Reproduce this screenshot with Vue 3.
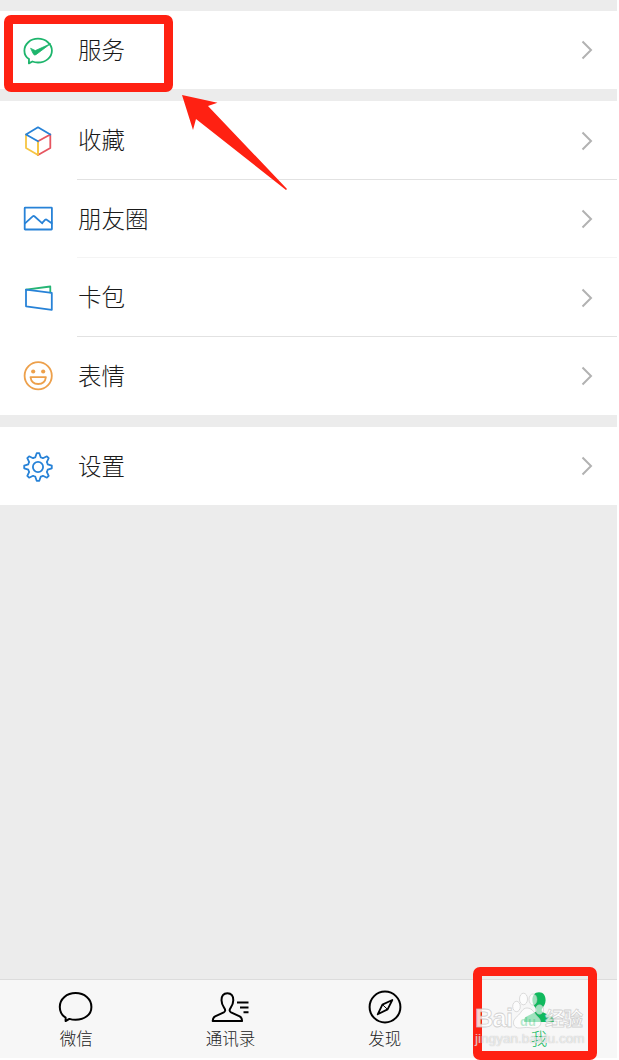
<script setup>
const groups = [
  [{ id: 'service', label: '服务' }],
  [
    { id: 'favorites', label: '收藏' },
    { id: 'moments', label: '朋友圈' },
    { id: 'cards', label: '卡包' },
    { id: 'stickers', label: '表情' }
  ],
  [{ id: 'settings', label: '设置' }]
]

const tabs = [
  { id: 'chats', label: '微信' },
  { id: 'contacts', label: '通讯录' },
  { id: 'discover', label: '发现' },
  { id: 'me', label: '我' }
]

const activeTab = 'me'
</script>

<template>
  <div class="page">
    <div class="screen">
      <!-- Menu -->
      <main class="menu">
        <section v-for="(group, i) in groups" :key="i" class="group">
          <div v-for="item in group" :key="item.id" :class="['row', 'row-' + item.id]">
            <svg class="row-icon" viewBox="0 0 32 32" fill="none" stroke-width="1.8" stroke-linejoin="round" stroke-linecap="round" aria-hidden="true">
              <g v-if="item.id === 'service'" stroke="#1db56c">
                <path d="M7 24.1C3.8 22 2.4 19.1 2.4 15.7C2.4 9.1 8.3 3.7 16 3.7S29.9 9.1 29.9 15.7S23.7 27.5 16 27.5C14 27.5 12.1 27.2 10.4 26.5L6.9 28.4Z" />
                <path d="M8.9 13.4L13.3 15.6L28.6 8.7L13.9 19.7Q12.3 20.7 11.3 19Z" fill="#1db56c" stroke-width=".8" />
              </g>
              <g v-else-if="item.id === 'favorites'">
                <path d="M4 9.5V23L16 30V16" stroke="#f6c543" />
                <path d="M16 30L28.3 23V9.5L16 16.3" stroke="#e65560" />
                <path d="M16 16.3V30" stroke="#f6c543" />
                <path d="M16 16.3L4 9.5L16 2.3L28.3 9.5" stroke="#2782d7" />
              </g>
              <g v-else-if="item.id === 'moments'" stroke="#2782d7">
                <rect x="2.7" y="4.7" width="27.2" height="21.8" rx=".5" />
                <path d="M3 20.3L11 13.2Q11.7 12.7 12.4 13.3L20.3 20.3M20 20.2L23.3 16.7Q24 16.1 24.7 16.7L29.7 20.3" />
              </g>
              <g v-else-if="item.id === 'cards'">
                <path d="M4 7.7L28.3 4.5V10.4" stroke="#25b574" />
                <path d="M4 7.7L29.8 10.9V27.8L4 24.3Z" stroke="#2782d7" />
              </g>
              <g v-else-if="item.id === 'stickers'" stroke="#eda04b">
                <circle cx="16.2" cy="15.8" r="13.6" />
                <path d="M8.5 17.1H23.9Q23 24 16.2 24T8.5 17.1Z" />
                <circle cx="11.2" cy="11.5" r="2.1" fill="#eda04b" stroke="none" />
                <circle cx="21.2" cy="11.5" r="2.1" fill="#eda04b" stroke="none" />
              </g>
              <g v-else stroke="#2782d7">
                <path d="M13.3 6.3L14.7 2.2H17.3L18.7 6.3Q20 6.6 20.9 7.2L24.9 5.3L26.7 7.1L24.8 11.1Q25.5 12.2 25.7 13.3L29.8 14.7V17.3L25.7 18.7Q25.4 20 24.8 20.9L26.7 24.9L24.9 26.7L20.9 24.8Q19.8 25.5 18.7 25.7L17.3 29.8H14.7L13.3 25.7Q12 25.4 11.1 24.8L7.1 26.7L5.3 24.9L7.2 20.9Q6.5 19.8 6.3 18.7L2.2 17.3V14.7L6.3 13.3Q6.6 12 7.2 11.1L5.3 7.1L7.1 5.3L11.1 7.2Q12.2 6.5 13.3 6.3Z" />
                <circle cx="16" cy="16" r="5.1" />
              </g>
            </svg>
            <div class="row-body">
              <span class="row-label">{{ item.label }}</span>
              <svg class="chevron" viewBox="0 0 12 20" aria-hidden="true">
                <path d="M1.5 1.5L10 10L1.5 18.5" fill="none" stroke="#b2b2b2" stroke-width="2" />
              </svg>
            </div>
          </div>
        </section>
      </main>

      <!-- Tab bar -->
      <nav class="tabbar">
        <div v-for="tab in tabs" :key="tab.id" :class="['tab', { active: tab.id === activeTab }]">
          <svg class="tab-icon" viewBox="0 0 40 34" fill="none" stroke="currentColor" stroke-width="2" stroke-linejoin="round" aria-hidden="true">
            <path v-if="tab.id === 'chats'" d="M9.6 27.6C5.8 25.2 3.8 21.3 3.8 16.9C3.8 9 10.8 3.1 19.6 3.1S35.4 9 35.4 16.9S28.4 29.8 19.6 29.8C17.4 29.8 15.3 29.5 13.4 28.9L9.6 31Z" />
            <g v-else-if="tab.id === 'contacts'">
              <path d="M17.4 3.3C13.3 3.3 11.5 6 11.5 10.2C11.5 14.1 13.1 16.1 14.6 18.5C15.5 20 15.4 21.5 13.8 22.3L5.1 26.4C3.1 27.4 2.7 28.8 2.7 31.1H32.1C32.1 28.8 31.7 27.4 29.7 26.4L21 22.3C19.4 21.5 19.3 20 20.2 18.5C21.7 16.1 23.3 14.1 23.3 10.2C23.3 6 21.5 3.3 17.4 3.3Z" />
              <path d="M27 12.5H38.5M30 17.5H38.5M33.5 22.2H38.5" />
            </g>
            <g v-else-if="tab.id === 'discover'">
              <circle cx="20" cy="17" r="15.4" />
              <path d="M27.3 10L22.6 19.4L12.7 24.3L17.4 14.6Z" stroke-width="1.8" />
              <path d="M17.4 14.6L22.6 19.4" stroke-width="1" />
            </g>
            <path v-else d="M20 2.3C15.5 2.3 13.4 5.6 13.4 10.2C13.4 14.1 15.4 16.1 16.8 18.5C17.7 20 17.4 21.5 16 22.3L7.5 26.4C5.5 27.4 5 28.8 5 32H35C35 28.8 34.5 27.4 32.5 26.4L24 22.3C22.6 21.5 22.3 20 23.2 18.5C24.6 16.1 26.6 14.1 26.6 10.2C26.6 5.6 24.5 2.3 20 2.3Z" fill="currentColor" stroke="none" />
          </svg>
          <span class="tab-label">{{ tab.label }}</span>
        </div>
      </nav>
    </div>

    <!-- Annotations -->
    <div class="mark mark-service"></div>
    <div class="mark mark-me"></div>
    <svg class="arrow" viewBox="0 0 106 96" aria-hidden="true">
      <path d="M0 0L35.5 7.8L26 11L105 94L104 95L14 24L11 35Z" fill="#ff2112" />
    </svg>

    <!-- Watermark -->
    <div class="watermark">
      <svg class="wm-brand" viewBox="0 0 114 40" aria-hidden="true">
        <g class="wm-text">
          <text x="1" y="37" font-size="25.5" textLength="38">Bai</text>
          <text x="71" y="36" font-size="19.5" textLength="38">经验</text>
        </g>
        <g class="wm-paw">
          <ellipse cx="42.5" cy="16.5" rx="3.8" ry="5.2" />
          <ellipse cx="49.5" cy="9" rx="4" ry="5.8" />
          <ellipse cx="59" cy="9.5" rx="4" ry="5.6" />
          <ellipse cx="65.5" cy="19.5" rx="4" ry="4.8" />
          <path d="M53 18C48 18 47.5 23 43 26.5C37 31 39 38.8 46 38Q53 36.8 59 38C67.5 38.8 69 31.5 64 27C60 23.5 59 18 53 18Z" />
        </g>
        <text class="wm-du" x="46" y="35.5" font-size="13">du</text>
      </svg>
      <div class="wm-url">jingyan.baidu.com</div>
    </div>
  </div>
</template>

<style>
body {
  background: #fff;
}
</style>

<style scoped>
.page {
  position: relative;
  width: 619px;
  height: 1060px;
  overflow: hidden;
  font-family: 'Noto Sans CJK SC', sans-serif;
}
.screen {
  display: flex;
  flex-direction: column;
  width: 617px;
  height: 1058px;
  background: #ececec;
}

/* Menu */
.menu {
  flex: 1;
  display: flex;
  flex-direction: column;
  gap: 12px;
  padding-top: 11px;
}
.group {
  background: #fff;
}
.row {
  display: flex;
  align-items: center;
  height: 78.5px;
  padding-left: 22px;
}
.row-service,
.row-settings {
  height: 78px;
}
.row-icon {
  width: 32px;
  height: 32px;
  margin-top: 1px;
  flex-shrink: 0;
}
.row-body {
  flex: 1;
  display: flex;
  align-items: center;
  justify-content: space-between;
  align-self: stretch;
  margin-left: 23px;
  padding-right: 24px;
  border-bottom: 1px solid #e2e2e2;
}
.row:last-child .row-body {
  border-bottom-color: transparent;
}
.row-moments .row-body {
  border-bottom-color: #f4f4f4;
}
.row-label {
  padding: 0 0 1px 1px;
  font-size: 23.5px;
  font-weight: 300;
  line-height: 34px;
  color: #1a1a1a;
}
.row-service .row-label,
.row-settings .row-label {
  padding-bottom: 2px;
}
.chevron {
  width: 12px;
  height: 20px;
  margin-top: 1.5px;
}

/* Tab bar */
.tabbar {
  display: flex;
  height: 79px;
  box-sizing: border-box;
  border-top: 1px solid #dcdcdc;
  background: #f7f7f7;
}
.tab {
  flex: 1;
  display: flex;
  flex-direction: column;
  align-items: center;
  padding-top: 10px;
  padding-right: 2px;
  color: #000;
}
.tab-icon {
  width: 40px;
  height: 34px;
}
.tab-label {
  margin-top: 2px;
  font-size: 16.5px;
  font-weight: 300;
  line-height: 24px;
  color: #222;
}
.tab.active,
.tab.active .tab-label {
  color: #10b95d;
}

/* Watermark */
.watermark {
  position: absolute;
  left: 474px;
  top: 990px;
  width: 114px;
  font-family: 'Liberation Sans', 'Noto Sans CJK SC', sans-serif;
}
.wm-brand {
  display: block;
  width: 114px;
  height: 40px;
  overflow: visible;
}
.wm-text {
  font-weight: 700;
  fill: rgba(255, 255, 255, 0.8);
  stroke: rgba(190, 190, 190, 0.7);
  stroke-width: 0.8;
}
.wm-paw {
  fill: rgba(255, 255, 255, 0.6);
  stroke: rgba(185, 185, 185, 0.6);
  stroke-width: 0.8;
}
.wm-du {
  font-weight: 700;
  fill: rgba(16, 185, 93, 0.3);
}
.wm-url {
  margin-left: 1px;
  font-size: 13.6px;
  line-height: 18px;
  white-space: nowrap;
  color: rgba(255, 255, 255, 0.65);
  text-shadow: 0 0 1px rgba(150, 150, 150, 0.7);
}

/* Annotations */
.mark {
  position: absolute;
  box-sizing: border-box;
  border: 9px solid #ff2112;
  border-radius: 7px;
}
.mark-service {
  left: 4px;
  top: 15px;
  width: 169px;
  height: 77px;
}
.mark-me {
  left: 473px;
  top: 967px;
  width: 124px;
  height: 93px;
}
.arrow {
  position: absolute;
  left: 182px;
  top: 95px;
  width: 106px;
  height: 96px;
}
</style>
